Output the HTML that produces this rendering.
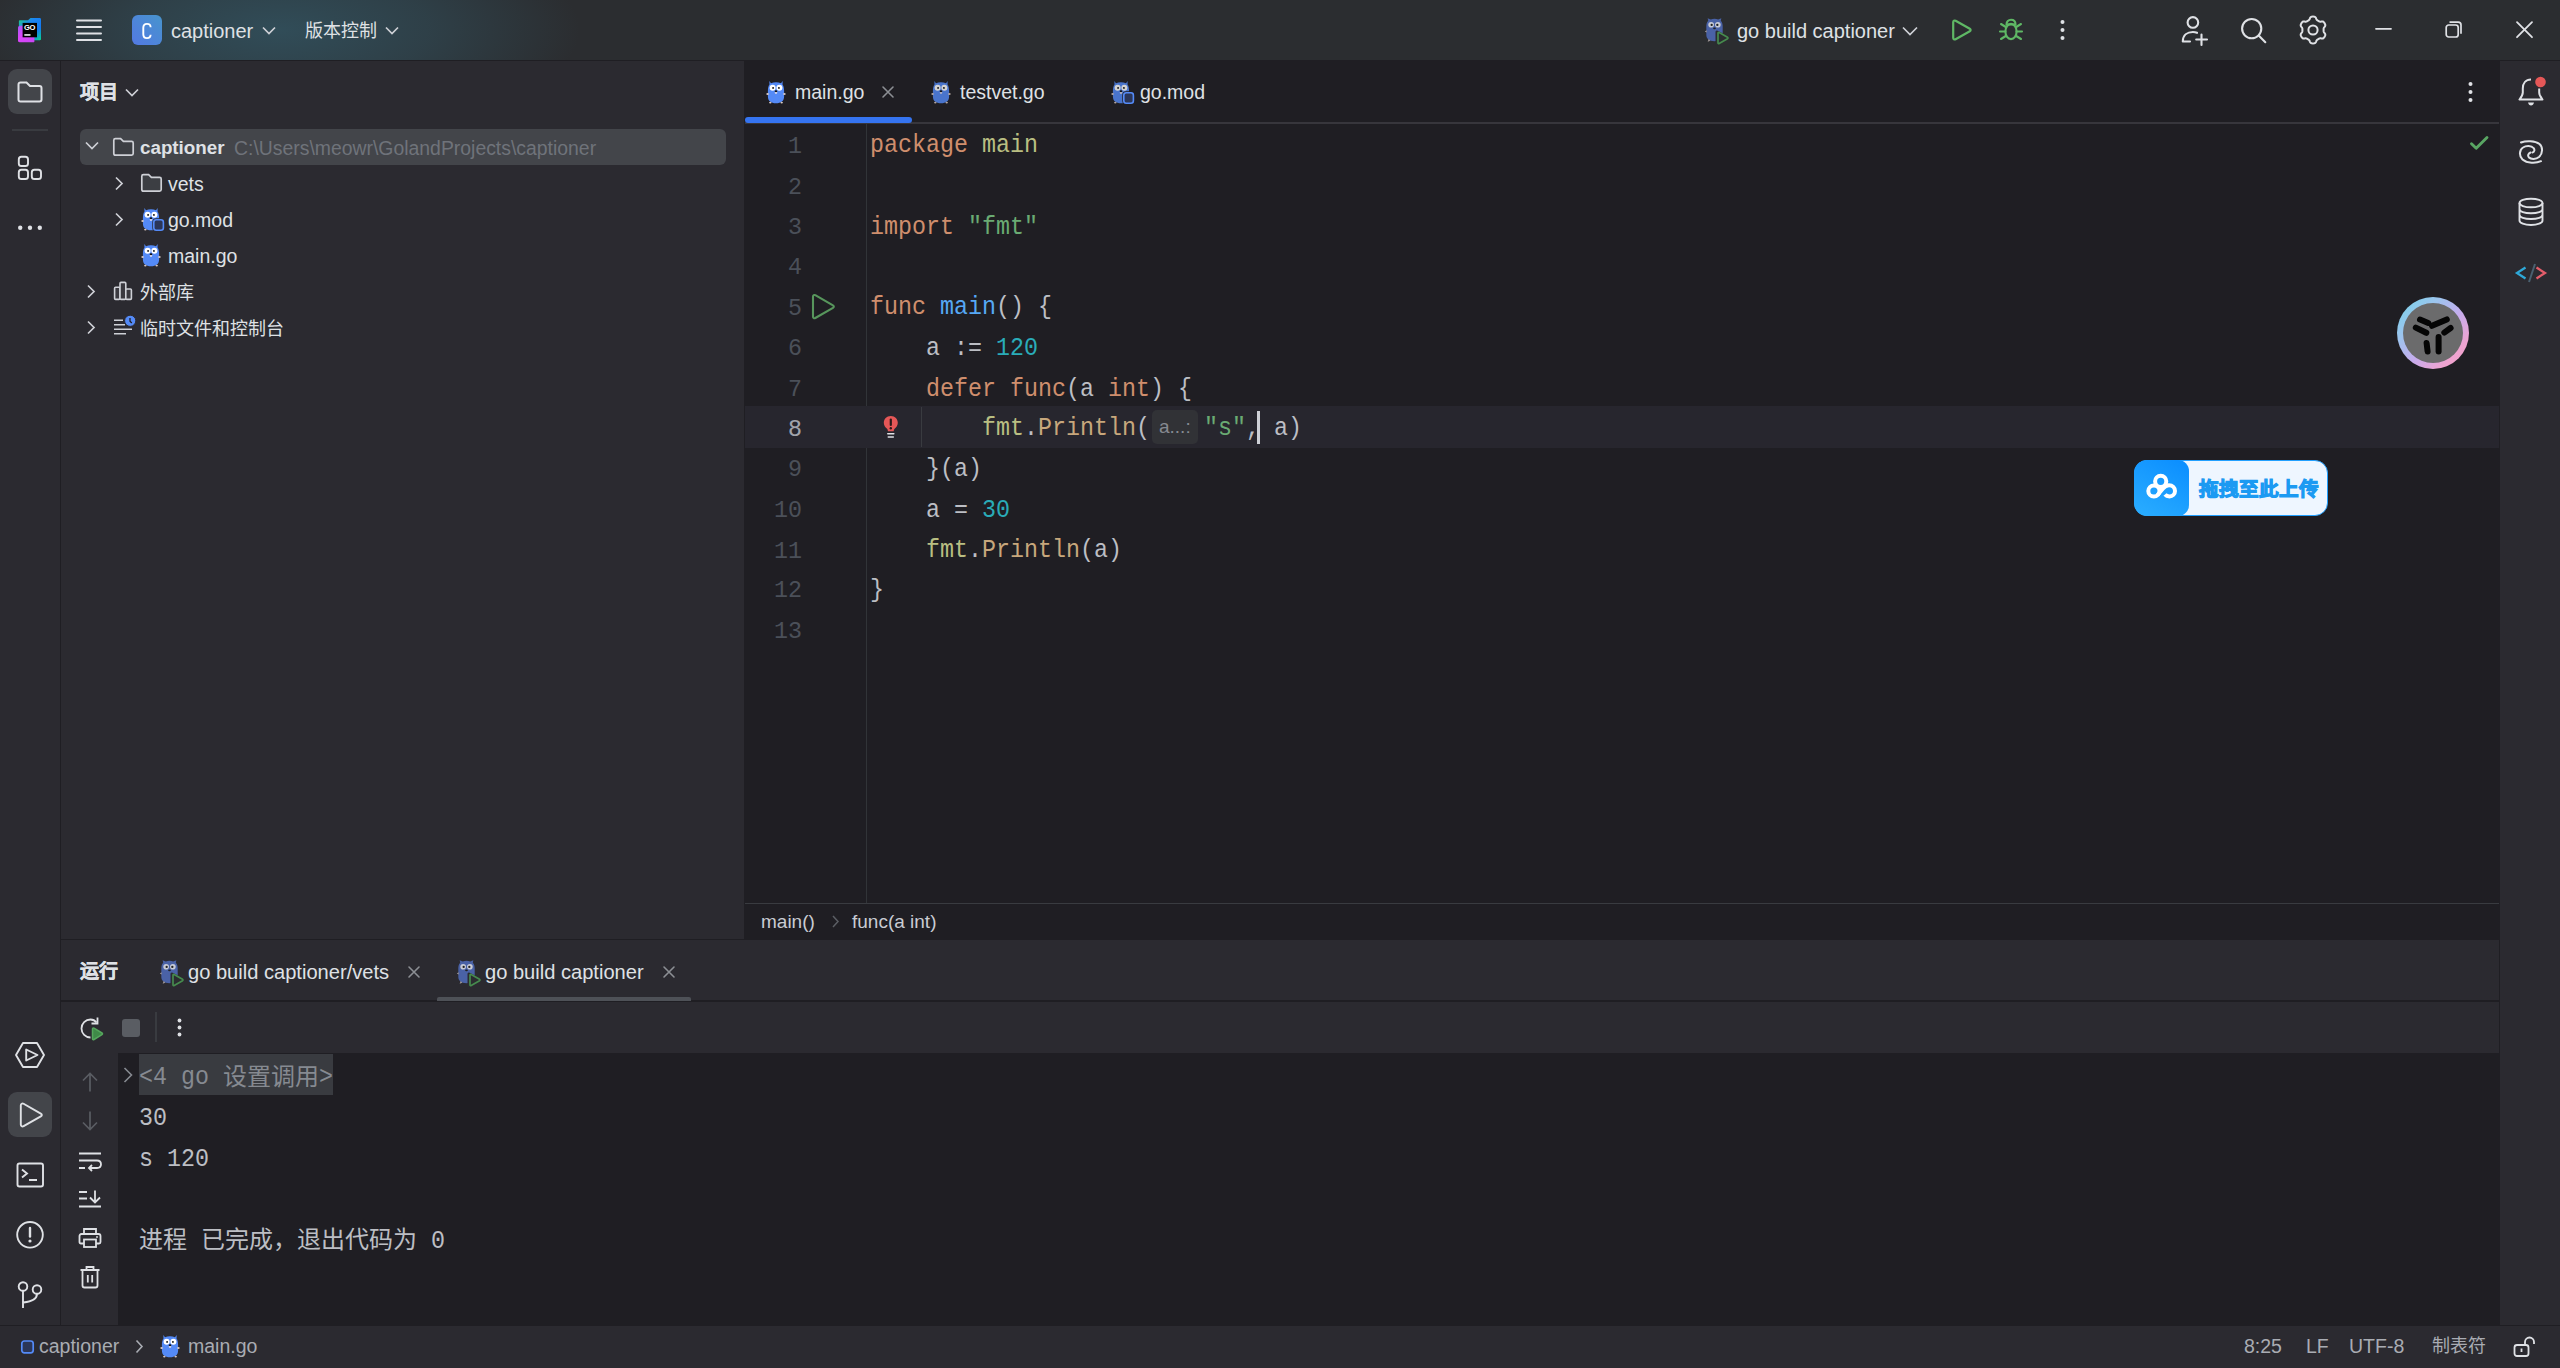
<!DOCTYPE html>
<html lang="zh-CN"><head><meta charset="utf-8">
<style>
*{margin:0;padding:0;box-sizing:border-box}
html,body{width:2560px;height:1368px;overflow:hidden;background:#2B2A30;font-family:"Liberation Sans",sans-serif;color:#DFE1E5}
.a{position:absolute}
.t{position:absolute;white-space:pre;font-size:19.5px;line-height:24px}
.m{font-family:"Liberation Mono",monospace;font-size:23.33px;white-space:pre;position:absolute;line-height:36.77px;transform:scaleY(1.1);transform-origin:0 0}
.c{font-family:"Liberation Mono",monospace;font-size:23.33px;white-space:pre;position:absolute;line-height:37.18px;transform:scaleY(1.1);transform-origin:0 0}
.n{font-family:"Liberation Mono",monospace;font-size:23.33px;white-space:pre;position:absolute;line-height:38.66px;transform:scaleY(1.045);transform-origin:0 0}
.k{position:absolute;white-space:pre;font-size:24px;line-height:30px}
svg{position:absolute;overflow:visible}
</style></head><body>
<svg width="0" height="0" style="position:absolute"><defs>
<symbol id="gopher" viewBox="0 0 20 24">
  <path d="M5 3.2 L3.3 1 L3.5 4.6 C2.3 6.1 1.9 8.6 1.9 11.5 V16.5 C1.9 21 5 23.3 10 23.3 C15 23.3 18.1 21 18.1 16.5 V11.5 C18.1 8.6 17.7 6.1 16.5 4.6 L16.7 1 L15 3.2 C13.6 2.5 11.9 2.2 10 2.2 C8.1 2.2 6.4 2.5 5 3.2 Z" fill="#548AF7"/>
  <ellipse cx="1.6" cy="14" rx="1.3" ry="1" fill="#D8C7C0"/><ellipse cx="18.4" cy="14" rx="1.3" ry="1" fill="#D8C7C0"/>
  <ellipse cx="4.3" cy="22.6" rx="1.2" ry="0.9" fill="#D8C7C0"/><ellipse cx="15.7" cy="22.6" rx="1.2" ry="0.9" fill="#D8C7C0"/>
  <circle cx="6.6" cy="7.7" r="3" fill="#fff"/><circle cx="13.4" cy="7.7" r="3" fill="#fff"/>
  <circle cx="7.1" cy="7.9" r="0.95" fill="#111"/><circle cx="12.9" cy="7.9" r="0.95" fill="#111"/>
  <ellipse cx="10" cy="11.2" rx="1.3" ry="0.9" fill="#111"/>
  <path d="M8.7 12.3 H11.3 C11.3 13.4 10.7 13.8 10 13.8 C9.3 13.8 8.7 13.4 8.7 12.3 Z" fill="#F2E6E6"/>
</symbol>
<symbol id="gopherd" viewBox="0 0 28 30">
  <g transform="translate(1,1) scale(1.05)"><path d="M4 3.5 L3.5 1.2 L6.5 2.3 C8.5 1.6 11.5 1.6 13.5 2.3 L16.5 1.2 L16 3.5 C17.5 5 17.8 7 17.8 9 L17.8 17 C17.8 21 15 23 10 23 C5 23 2.2 21 2.2 17 L2.2 9 C2.2 7 2.5 5 4 3.5 Z" fill="#4A62A6"/>
  <circle cx="6.8" cy="7.4" r="2.7" fill="#c8cbd6"/><circle cx="13.2" cy="7.4" r="2.7" fill="#c8cbd6"/>
  <circle cx="7.3" cy="7.5" r="1.1" fill="#222"/><circle cx="12.7" cy="7.5" r="1.1" fill="#222"/>
  <ellipse cx="10" cy="10.8" rx="1.3" ry="0.9" fill="#222"/>
  <path d="M2.5 12.5 L0.8 13.8 L2.6 14.8 Z M4.5 21 L3.5 23.5 L6 22.5 Z" fill="#a49b9b"/></g>
  <path d="M14 16 L14 28 L25.5 22 Z" fill="#2B2D30" stroke="#2B2D30" stroke-width="3" stroke-linejoin="round"/>
  <path d="M15 17.2 C15 16.5 15.6 16.2 16.2 16.5 L24.5 21.2 C25.1 21.6 25.1 22.4 24.5 22.8 L16.2 27.5 C15.6 27.8 15 27.5 15 26.8 Z" fill="none" stroke="#468A4E" stroke-width="1.7"/>
</symbol>
<symbol id="folder" viewBox="0 0 23 20"><path d="M1.8 3.2 C1.8 2.2 2.4 1.6 3.4 1.6 H8.6 L11.4 4.4 H19.6 C20.6 4.4 21.2 5 21.2 6 V16.6 C21.2 17.6 20.6 18.2 19.6 18.2 H3.4 C2.4 18.2 1.8 17.6 1.8 16.6 Z" fill="#3C3E43" stroke="#CED0D6" stroke-width="1.7"/></symbol>
</defs></svg>
<!-- title bar -->
<div class="a" id="title" style="left:0;top:0;width:2560px;height:60px;background:#2B2D30;overflow:hidden">
  <div class="a" style="left:-20px;top:-80px;width:600px;height:220px;background:radial-gradient(closest-side,rgba(50,82,95,0.85),rgba(50,82,95,0.5) 50%,rgba(43,45,48,0) 100%)"></div>
</div>
<div class="a" style="left:0;top:60px;width:2560px;height:1px;background:#1F1E23"></div>


<!-- TITLE CONTENT -->
<svg style="left:17px;top:17px" width="26" height="26" viewBox="0 0 26 26">
  <defs><linearGradient id="glb" x1="0" y1="0" x2="1" y2="1"><stop offset="0" stop-color="#21D07F"/><stop offset="0.35" stop-color="#1A86F2"/><stop offset="0.7" stop-color="#1479F0"/><stop offset="1" stop-color="#07D98A"/></linearGradient>
  <linearGradient id="glp" x1="0" y1="0" x2="1" y2="1"><stop offset="0" stop-color="#A05CF5"/><stop offset="0.4" stop-color="#DA45F8"/><stop offset="1" stop-color="#C946F5"/></linearGradient></defs>
  <path d="M3 3.2 H11 L13.5 1 H22.5 C23.5 1 24 1.5 24 2.5 V22 C24 22.8 23.5 23.2 22.8 23.2 H8 V9 H1.9 V4.5 C1.9 3.7 2.3 3.2 3 3.2 Z" fill="url(#glb)"/>
  <path d="M3.2 8.8 H12 V25.2 H2.6 C1.6 25.2 1 24.6 1 23.6 V11 C1 9.6 1.8 8.8 3.2 8.8 Z M12 18 H17.4 V24.2 C17.4 24.8 17 25.2 16.4 25.2 H12 Z" fill="url(#glp)"/>
  <rect x="5.6" y="5.9" width="14.4" height="14.4" fill="#000"/>
  <text x="12.6" y="13.3" font-family="Liberation Sans" font-weight="bold" font-size="7.6" fill="#fff" text-anchor="middle" letter-spacing="-0.3">GO</text>
  <rect x="7.3" y="17.2" width="6.2" height="1.5" fill="#fff"/>
</svg>
<svg style="left:76px;top:19px" width="26" height="23" viewBox="0 0 26 23"><g stroke="#DFE1E5" stroke-width="2" stroke-linecap="round"><path d="M1 1.5H25M1 8H25M1 14.5H25M1 21H25"/></g></svg>
<div class="a" style="left:132px;top:15px;width:30px;height:30px;border-radius:6px;background:linear-gradient(225deg,#4794CD,#5379E3)"></div>
<svg style="left:132px;top:15px" width="30" height="30" viewBox="0 0 30 30"><path d="M18.6 12.2 C18.6 10 17.3 8.9 15 8.9 C12.6 8.9 11.3 10.2 11.3 12.8 V19.2 C11.3 21.8 12.6 23.1 15 23.1 C17.3 23.1 18.6 22 18.6 19.8" fill="none" stroke="#fff" stroke-width="1.9"/></svg>
<div class="t" style="left:171px;top:18.5px;font-size:20px">captioner</div>
<svg style="left:262px;top:26px" width="14" height="10" viewBox="0 0 14 10"><path d="M1 1.5L7 7.5L13 1.5" fill="none" stroke="#CED0D6" stroke-width="1.7"/></svg>
<div class="t" style="left:305px;top:19px;font-size:18px">版本控制</div>
<svg style="left:385px;top:26px" width="14" height="10" viewBox="0 0 14 10"><path d="M1 1.5L7 7.5L13 1.5" fill="none" stroke="#CED0D6" stroke-width="1.7"/></svg>

<svg style="left:1703px;top:16px" width="28" height="30" viewBox="0 0 28 30"><use href="#gopherd"/></svg>
<div class="t" style="left:1737px;top:18.5px;font-size:20px">go build captioner</div>
<svg style="left:1902px;top:26px" width="16" height="10" viewBox="0 0 16 10"><path d="M1 1.5L8 8.5L15 1.5" fill="none" stroke="#CED0D6" stroke-width="1.7"/></svg>
<svg style="left:1951px;top:19px" width="21" height="22" viewBox="0 0 21 22"><path d="M2.2 3.2 C2.2 1.8 3.4 1.1 4.6 1.8 L18.8 9.8 C19.9 10.4 19.9 11.6 18.8 12.2 L4.6 20.2 C3.4 20.9 2.2 20.2 2.2 18.8 Z" fill="none" stroke="#5FB865" stroke-width="2.2"/></svg>
<svg style="left:1998px;top:18px" width="26" height="23" viewBox="0 0 26 23"><g fill="none" stroke="#5FB865" stroke-width="2.1" stroke-linecap="round"><path d="M8.5 6.5 C8.5 3.5 10.5 1.8 13 1.8 C15.5 1.8 17.5 3.5 17.5 6.5 Z"/><ellipse cx="13" cy="13.5" rx="5.6" ry="7.6"/><path d="M2 13.5H7.5M18.5 13.5H24M3 6L7.8 9M23 6L18.2 9M3 21L7.8 18M23 21L18.2 18"/></g></svg>
<svg style="left:2058px;top:18px" width="9" height="24" viewBox="0 0 9 24"><g fill="#DFE1E5"><circle cx="4.5" cy="4" r="2"/><circle cx="4.5" cy="12" r="2"/><circle cx="4.5" cy="20" r="2"/></g></svg>
<svg style="left:2180px;top:15px" width="30" height="30" viewBox="0 0 30 30"><g fill="none" stroke="#DFE1E5" stroke-width="2.1" stroke-linecap="round"><circle cx="12.9" cy="7.4" r="5.3"/><path d="M2.8 26.5 C2.8 20 7.5 17 12.9 17 C14.5 17 15.8 17.3 17 17.8 M2.8 26.5 H10"/><path d="M21.5 19.5V30M16.2 24.5H27"/></g></svg>
<svg style="left:2238px;top:14px" width="30" height="30" viewBox="0 0 30 30"><g fill="none" stroke="#DFE1E5" stroke-width="2.1" stroke-linecap="round"><circle cx="13.7" cy="14.6" r="9.6"/><path d="M20.7 21.6L27.3 28.2"/></g></svg>
<svg style="left:2298px;top:15px" width="30" height="30" viewBox="0 0 30 30"><g fill="none" stroke="#DFE1E5" stroke-width="2" stroke-linejoin="round"><path d="M25.60 15.00 L25.60 14.54 L25.60 14.07 L25.62 13.60 L25.73 13.11 L26.04 12.55 L26.59 11.89 L27.10 11.18 L27.32 10.52 L27.28 9.91 L27.11 9.35 L26.88 8.82 L26.60 8.30 L26.30 7.80 L25.95 7.33 L25.54 6.91 L25.04 6.58 L24.36 6.43 L23.49 6.51 L22.64 6.66 L22.00 6.65 L21.52 6.50 L21.10 6.29 L20.70 6.05 L20.30 5.82 L19.90 5.59 L19.49 5.36 L19.10 5.11 L18.73 4.76 L18.40 4.21 L18.11 3.41 L17.75 2.61 L17.28 2.09 L16.73 1.82 L16.16 1.69 L15.58 1.62 L15.00 1.60 L14.42 1.62 L13.84 1.69 L13.27 1.82 L12.72 2.09 L12.25 2.61 L11.89 3.41 L11.60 4.21 L11.27 4.76 L10.90 5.11 L10.51 5.36 L10.10 5.59 L9.70 5.82 L9.30 6.05 L8.90 6.29 L8.48 6.50 L8.00 6.65 L7.36 6.66 L6.51 6.51 L5.64 6.43 L4.96 6.58 L4.46 6.91 L4.05 7.33 L3.70 7.80 L3.40 8.30 L3.12 8.82 L2.89 9.35 L2.72 9.91 L2.68 10.52 L2.90 11.18 L3.41 11.89 L3.96 12.55 L4.27 13.11 L4.38 13.60 L4.40 14.07 L4.40 14.54 L4.40 15.00 L4.40 15.46 L4.40 15.93 L4.38 16.40 L4.27 16.89 L3.96 17.45 L3.41 18.11 L2.90 18.82 L2.68 19.48 L2.72 20.09 L2.89 20.65 L3.12 21.18 L3.40 21.70 L3.70 22.20 L4.05 22.67 L4.46 23.09 L4.96 23.42 L5.64 23.57 L6.51 23.49 L7.36 23.34 L8.00 23.35 L8.48 23.50 L8.90 23.71 L9.30 23.95 L9.70 24.18 L10.10 24.41 L10.51 24.64 L10.90 24.89 L11.27 25.24 L11.60 25.79 L11.89 26.59 L12.25 27.39 L12.72 27.91 L13.27 28.18 L13.84 28.31 L14.42 28.38 L15.00 28.40 L15.58 28.38 L16.16 28.31 L16.73 28.18 L17.28 27.91 L17.75 27.39 L18.11 26.59 L18.40 25.79 L18.73 25.24 L19.10 24.89 L19.49 24.64 L19.90 24.41 L20.30 24.18 L20.70 23.95 L21.10 23.71 L21.52 23.50 L22.00 23.35 L22.64 23.34 L23.49 23.49 L24.36 23.57 L25.04 23.42 L25.54 23.09 L25.95 22.67 L26.30 22.20 L26.60 21.70 L26.88 21.18 L27.11 20.65 L27.28 20.09 L27.32 19.48 L27.10 18.82 L26.59 18.11 L26.04 17.45 L25.73 16.89 L25.62 16.40 L25.60 15.93 L25.60 15.46 Z"/><circle cx="15" cy="15" r="4.6"/></g></svg>
<svg style="left:2375px;top:27px" width="17" height="4" viewBox="0 0 17 4"><path d="M1 1.8H16" stroke="#DFE1E5" stroke-width="1.8" stroke-linecap="round"/></svg>
<svg style="left:2444px;top:20px" width="20" height="20" viewBox="0 0 20 20"><g fill="none" stroke="#DFE1E5" stroke-width="1.7"><rect x="2.2" y="5" width="12" height="12" rx="2.5"/><path d="M5.5 2.2H14.2C16 2.2 17 3.2 17 5V13.8"/></g></svg>
<svg style="left:2515px;top:20px" width="19" height="19" viewBox="0 0 19 19"><path d="M2 2.2L17 17.2M17 2.2L2 17.2" stroke="#DFE1E5" stroke-width="1.8" stroke-linecap="round"/></svg>

<!-- left strip -->
<div class="a" style="left:0;top:61px;width:60px;height:1264px;background:#2B2A30"></div>
<div class="a" style="left:60px;top:61px;width:1px;height:1264px;background:#1F1E23"></div>

<!-- project panel -->
<div class="a" style="left:61px;top:61px;width:683px;height:878px;background:#2B2A30"></div>
<div class="a" style="left:744px;top:61px;width:1px;height:878px;background:#1F1E23"></div>

<!-- editor -->
<div class="a" style="left:745px;top:61px;width:1755px;height:878px;background:#1F1E23"></div>
<div class="a" style="left:745px;top:122px;width:1755px;height:2px;background:#37363C"></div>
<div class="a" style="left:745px;top:903px;width:1755px;height:1px;background:#393B40"></div>
<div class="a" style="left:866px;top:124px;width:1px;height:779px;background:#313438"></div>
<div class="a" style="left:745px;top:406px;width:1755px;height:41.5px;background:#27262E"></div>

<!-- right strip -->
<div class="a" style="left:2499px;top:61px;width:1px;height:1264px;background:#1F1E23"></div>
<div class="a" style="left:2500px;top:61px;width:60px;height:1264px;background:#2B2A30"></div>

<!-- bottom panel -->
<div class="a" style="left:61px;top:939px;width:2438px;height:1px;background:#1F1E23"></div>
<div class="a" style="left:61px;top:940px;width:2438px;height:61px;background:#2B2A30"></div>
<div class="a" style="left:61px;top:1000px;width:2438px;height:2px;background:#1F1E23"></div>
<div class="a" style="left:61px;top:1002px;width:2438px;height:51px;background:#2B2A30"></div>
<div class="a" style="left:61px;top:1053px;width:57px;height:272px;background:#2B2A30"></div>
<div class="a" style="left:118px;top:1053px;width:2381px;height:272px;background:#1F1E23"></div>

<!-- status bar -->
<div class="a" style="left:0;top:1325px;width:2560px;height:1px;background:#1F1E23"></div>
<div class="a" style="left:0;top:1326px;width:2560px;height:42px;background:#2B2A30"></div>


<!-- LEFT STRIP CONTENT -->
<div class="a" style="left:8px;top:69px;width:44px;height:45px;border-radius:9px;background:#43454A"></div>
<svg style="left:16px;top:80px" width="28" height="24" viewBox="0 0 28 24"><path d="M2.5 4.5 C2.5 3.2 3.3 2.5 4.5 2.5 H10.5 L14 6 H23.5 C24.8 6 25.5 6.8 25.5 8 V19.5 C25.5 20.8 24.8 21.5 23.5 21.5 H4.5 C3.2 21.5 2.5 20.8 2.5 19.5 Z" fill="none" stroke="#DFE1E5" stroke-width="2"/></svg>
<div class="a" style="left:12px;top:129px;width:36px;height:2px;background:#393B40"></div>
<svg style="left:16px;top:154px" width="28" height="28" viewBox="0 0 28 28"><g fill="none" stroke="#DFE1E5" stroke-width="1.9"><rect x="2.8" y="2.8" width="9.2" height="9.2" rx="2.6"/><rect x="2.8" y="15.8" width="9.2" height="9.2" rx="2.6"/><rect x="15.8" y="15.8" width="9.2" height="9.2" rx="2.6"/></g></svg>
<svg style="left:16px;top:222px" width="28" height="12" viewBox="0 0 28 12"><g fill="#DFE1E5"><circle cx="4.2" cy="5.8" r="2.2"/><circle cx="14" cy="5.8" r="2.2"/><circle cx="23.8" cy="5.8" r="2.2"/></g></svg>

<svg style="left:14px;top:1040px" width="32" height="30" viewBox="0 0 32 30"><g fill="none" stroke="#DFE1E5" stroke-width="1.9" stroke-linejoin="round"><path d="M9 3 H23 L30 15 L23 27 H9 L2 15 Z"/><path d="M12.2 9.5 V20.5 L23.5 15 Z"/></g></svg>
<div class="a" style="left:8px;top:1092px;width:44px;height:45px;border-radius:9px;background:#43454A"></div>
<svg style="left:17px;top:1101px" width="28" height="28" viewBox="0 0 28 28"><path d="M3.8 4.5 C3.8 2.8 5.2 2 6.6 2.8 L23.8 12.6 C25.2 13.4 25.2 14.6 23.8 15.4 L6.6 25.2 C5.2 26 3.8 25.2 3.8 23.5 Z" fill="none" stroke="#DFE1E5" stroke-width="1.9" stroke-linejoin="round"/></svg>
<svg style="left:15px;top:1161px" width="30" height="28" viewBox="0 0 30 28"><g fill="none" stroke="#DFE1E5" stroke-width="1.9"><rect x="2.5" y="2.5" width="25.5" height="23" rx="2"/><path d="M7 8.5 L12 12.5 L7 16.5 M14 19 H22"/></g></svg>
<svg style="left:15px;top:1220px" width="30" height="30" viewBox="0 0 30 30"><g fill="none" stroke="#DFE1E5" stroke-width="1.9"><circle cx="15" cy="14.8" r="12.8"/></g><path d="M15 8 V16.5" stroke="#DFE1E5" stroke-width="2.4" stroke-linecap="round"/><circle cx="15" cy="21" r="1.6" fill="#DFE1E5"/></svg>
<svg style="left:15px;top:1280px" width="30" height="30" viewBox="0 0 30 30"><g fill="none" stroke="#DFE1E5" stroke-width="1.9"><circle cx="8" cy="6.5" r="4.3"/><circle cx="22" cy="9.5" r="4.3"/><path d="M8 10.8 V28 M22 13.8 C22 18.5 18 21.5 8.5 22.5"/></g></svg>

<!-- PROJECT PANEL CONTENT -->
<div class="t" style="left:80px;top:81px;font-weight:bold;font-size:19px;-webkit-text-stroke:0.35px #DFE1E5">项目</div>
<svg style="left:125px;top:88px" width="14" height="10" viewBox="0 0 14 10"><path d="M1 1.5L7 7.5L13 1.5" fill="none" stroke="#CED0D6" stroke-width="1.7"/></svg>
<div class="a" style="left:80px;top:129px;width:646px;height:36px;border-radius:6px;background:#43454A"></div>
<svg style="left:85px;top:141px" width="14" height="10" viewBox="0 0 14 10"><path d="M1 1.5L7 7.5L13 1.5" fill="none" stroke="#CED0D6" stroke-width="1.7"/></svg>
<svg style="left:112px;top:137px" width="23" height="20" viewBox="0 0 23 20"><use href="#folder"/></svg>
<div class="t" style="left:140px;top:136px;font-weight:bold;font-size:18.8px">captioner</div>
<div class="t" style="left:234px;top:135.7px;color:#6F737A;font-size:19.4px">C:\Users\meowr\GolandProjects\captioner</div>

<svg style="left:114px;top:176px" width="10" height="15" viewBox="0 0 10 15"><path d="M2 1.5L8 7.5L2 13.5" fill="none" stroke="#CED0D6" stroke-width="1.7"/></svg>
<svg style="left:140px;top:173px" width="23" height="20" viewBox="0 0 23 20"><use href="#folder"/></svg>
<div class="t" style="left:168px;top:172px">vets</div>

<svg style="left:114px;top:212px" width="10" height="15" viewBox="0 0 10 15"><path d="M2 1.5L8 7.5L2 13.5" fill="none" stroke="#CED0D6" stroke-width="1.7"/></svg>
<svg style="left:141px;top:207px" width="20" height="24" viewBox="0 0 20 24"><use href="#gopher"/></svg>
<svg style="left:152px;top:218px" width="13" height="14" viewBox="0 0 13 14"><rect x="1.8" y="1.8" width="9.6" height="10.4" rx="2.4" fill="#2B3658" stroke="#2B2A30" stroke-width="3"/><rect x="1.8" y="1.8" width="9.6" height="10.4" rx="2.4" fill="#2B3658" stroke="#548AF7" stroke-width="1.6"/></svg>
<div class="t" style="left:168px;top:207.5px">go.mod</div>

<svg style="left:141px;top:243px" width="20" height="24" viewBox="0 0 20 24"><use href="#gopher"/></svg>
<div class="t" style="left:168px;top:243.7px">main.go</div>

<svg style="left:86px;top:284px" width="10" height="15" viewBox="0 0 10 15"><path d="M2 1.5L8 7.5L2 13.5" fill="none" stroke="#CED0D6" stroke-width="1.7"/></svg>
<svg style="left:112px;top:280px" width="24" height="22" viewBox="0 0 24 22"><g fill="#3A393F" stroke="#CED0D6" stroke-width="1.6" stroke-linejoin="round"><rect x="2.6" y="7.2" width="5.4" height="12.2" rx="1"/><rect x="8" y="2.4" width="5.8" height="17" rx="1"/><rect x="13.8" y="9" width="5.6" height="10.4" rx="1"/></g></svg>
<div class="t" style="left:140px;top:281px;font-size:18px">外部库</div>

<svg style="left:86px;top:320px" width="10" height="15" viewBox="0 0 10 15"><path d="M2 1.5L8 7.5L2 13.5" fill="none" stroke="#CED0D6" stroke-width="1.7"/></svg>
<svg style="left:112px;top:312px" width="26" height="26" viewBox="0 0 26 26"><g stroke="#CED0D6" stroke-width="1.6"><path d="M2 8.3H11M2 12.8H13M2 17.3H20M2 21.8H14"/></g><circle cx="18.2" cy="8.8" r="5.6" fill="#548AF7" stroke="#2B2A30" stroke-width="1"/><path d="M18 6V9.2L19.8 11" stroke="#1F1E23" stroke-width="1.3" fill="none"/></svg>
<div class="t" style="left:140px;top:317px;font-size:18px">临时文件和控制台</div>


<!-- EDITOR CONTENT -->
<svg style="left:766px;top:80px" width="20" height="24" viewBox="0 0 20 24"><use href="#gopher"/></svg>
<div class="t" style="left:795px;top:80px">main.go</div>
<svg style="left:881px;top:85px" width="14" height="14" viewBox="0 0 14 14"><path d="M2 2L12 12M12 2L2 12" stroke="#8C8F94" stroke-width="1.6" stroke-linecap="round"/></svg>
<div class="a" style="left:745px;top:117px;width:167px;height:6px;border-radius:3px;background:#3574F0"></div>
<svg style="left:931px;top:80px;opacity:0.8" width="20" height="24" viewBox="0 0 20 24"><use href="#gopher"/></svg>
<div class="t" style="left:960px;top:80px">testvet.go</div>
<svg style="left:1111px;top:80px;opacity:0.8" width="20" height="24" viewBox="0 0 20 24"><use href="#gopher"/></svg>
<svg style="left:1122px;top:91px" width="13" height="14" viewBox="0 0 13 14"><rect x="1.8" y="1.8" width="9.6" height="10.4" rx="2.4" fill="#2B3658" stroke="#1F1E23" stroke-width="3"/><rect x="1.8" y="1.8" width="9.6" height="10.4" rx="2.4" fill="#2B3658" stroke="#548AF7" stroke-width="1.6"/></svg>
<div class="t" style="left:1140px;top:80px">go.mod</div>
<svg style="left:2466px;top:80px" width="9" height="24" viewBox="0 0 9 24"><g fill="#DFE1E5"><circle cx="4.5" cy="4" r="2"/><circle cx="4.5" cy="12" r="2"/><circle cx="4.5" cy="20" r="2"/></g></svg>

<div class="n" style="left:745px;top:127.3px;width:57px;text-align:right;color:#4B5059">1
2
3
4
5
6
7
8
9
10
11
12
13</div>
<div class="n" style="left:745px;top:410.1px;width:57px;text-align:right;color:#A1A3AB">8</div>
<div class="a" style="left:921px;top:407px;width:1px;height:40px;background:#393B40"></div>
<div class="a" style="left:1152px;top:410px;width:46px;height:34px;border-radius:5px;background:#313236"></div>
<div class="t" style="left:1159px;top:415px;font-size:19px;color:#868A91">a...:</div>
<div class="m" style="left:870px;top:126px;color:#BCBEC4"><span style="color:#CF8E6D">package</span> <span style="color:#B9BE82">main</span>

<span style="color:#CF8E6D">import</span> <span style="color:#6AAB73">"fmt"</span>

<span style="color:#CF8E6D">func</span> <span style="color:#56A8F5">main</span>() {
    a := <span style="color:#2AACB8">120</span>
    <span style="color:#CF8E6D">defer</span> <span style="color:#CF8E6D">func</span>(a <span style="color:#CF8E6D">int</span>) {
        <span style="color:#B9BE82">fmt</span>.<span style="color:#C7A77C">Println</span>(<span style="display:inline-block;width:54px"></span><span style="color:#6AAB73">"s"</span>, a)
    }(a)
    a = <span style="color:#2AACB8">30</span>
    <span style="color:#B9BE82">fmt</span>.<span style="color:#C7A77C">Println</span>(a)
}
</div>
<div class="a" style="left:1257px;top:411px;width:3px;height:33px;background:#CED0D6"></div>
<svg style="left:808px;top:293px" width="28" height="28" viewBox="0 0 28 28"><path d="M5 3.5 C5 2.2 6.2 1.6 7.3 2.2 L25 12.4 C26.1 13 26.1 14.2 25 14.8 L7.3 25 C6.2 25.6 5 25 5 23.7 Z" fill="none" stroke="#57965C" stroke-width="2.1" stroke-linejoin="round"/></svg>
<svg style="left:881px;top:414px" width="20" height="26" viewBox="0 0 20 26"><path d="M9.8 2 C5.5 2 2.8 5 2.8 8.8 C2.8 11.5 4.3 13.2 5.8 14.6 C6.6 15.4 6.9 16.2 6.9 17.2 H12.7 C12.7 16.2 13 15.4 13.8 14.6 C15.3 13.2 16.8 11.5 16.8 8.8 C16.8 5 14.1 2 9.8 2 Z" fill="#E55757"/><path d="M9.8 5.5V11" stroke="#2a1a1a" stroke-width="2.2" stroke-linecap="round"/><circle cx="9.8" cy="14.2" r="1.2" fill="#2a1a1a"/><path d="M6.8 19.8H12.8M7.3 23H12.3" stroke="#DFE1E5" stroke-width="1.6" stroke-linecap="round"/></svg>
<svg style="left:2468px;top:134px" width="22" height="18" viewBox="0 0 22 18"><path d="M3.5 9.8L8.2 14.3L19 3.5" fill="none" stroke="#59A663" stroke-width="2.9" stroke-linecap="round" stroke-linejoin="round"/></svg>

<div class="t" style="left:761px;top:910px;font-size:19px;color:#C9CCD3">main()</div>
<svg style="left:830px;top:914px" width="10" height="15" viewBox="0 0 10 15"><path d="M3 2L8 7.5L3 13" fill="none" stroke="#5B5E64" stroke-width="1.5"/></svg>
<div class="t" style="left:852px;top:910px;font-size:19px;color:#C9CCD3">func(a int)</div>


<!-- RIGHT STRIP -->
<svg style="left:2514px;top:74px" width="34" height="34" viewBox="0 0 34 34"><g fill="none" stroke="#DFE1E5" stroke-width="2" stroke-linejoin="round"><path d="M17 5.5 C11.5 5.5 8.8 9.5 8.8 14.5 V18.5 C8.8 21 7.5 23 5.5 25.5 H28.5 C26.5 23 25.2 21 25.2 18.5 V14.5"/></g><path d="M14 28.5 H20 C19.5 30.5 18.5 31.5 17 31.5 C15.5 31.5 14.5 30.5 14 28.5 Z" fill="#DFE1E5"/><circle cx="26.5" cy="8" r="5.3" fill="#E55757"/></svg>
<svg style="left:2517px;top:138px" width="28" height="28" viewBox="0 0 28 28"><g fill="none" stroke="#DFE1E5" stroke-width="2" stroke-linecap="round"><path d="M4 4.5 C9 2.5 18 2.5 22.5 6 C26 9 26 15.5 22 19 C19 21.5 14 21.5 12 19.5 C10.5 18 11 15.5 13.5 14.5"/><path d="M24 23.2 C19 25.5 10 25.5 5.5 21.5 C2 18.5 2 12 6 9.5 C9 7.5 14.5 7.5 16.5 10 C18 11.5 17.5 14 15.5 14.5"/></g></svg>
<svg style="left:2517px;top:197px" width="28" height="30" viewBox="0 0 28 30"><g fill="none" stroke="#DFE1E5" stroke-width="1.9"><ellipse cx="14" cy="6" rx="11.5" ry="4.3"/><path d="M2.5 6 V23.5 C2.5 26 7.5 28 14 28 C20.5 28 25.5 26 25.5 23.5 V6 M2.5 12 C2.5 14.5 7.5 16.3 14 16.3 C20.5 16.3 25.5 14.5 25.5 12 M2.5 17.8 C2.5 20.3 7.5 22 14 22 C20.5 22 25.5 20.3 25.5 17.8"/></g></svg>
<svg style="left:2514px;top:262px" width="34" height="22" viewBox="0 0 34 22"><path d="M11.5 5.5 L3 11 L11.5 16.5" fill="none" stroke="#2EA8D8" stroke-width="2.3"/><path d="M21 2 L15 20" stroke="#4A6070" stroke-width="2"/><path d="M22.5 5.5 L31 11 L22.5 16.5" fill="none" stroke="#E35D6A" stroke-width="2.3"/></svg>

<!-- FLOATING -->
<div class="a" style="left:2397px;top:297px;width:72px;height:72px;border-radius:50%;background:linear-gradient(135deg,#72D6E8 0%,#9CC4EE 30%,#C6ADEE 55%,#EFA3D0 80%,#F2A0C6 100%)"></div>
<div class="a" style="left:2403px;top:303px;width:60px;height:60px;border-radius:50%;background:#6B6B6C"></div>
<svg style="left:2397px;top:297px" width="72" height="72" viewBox="2397 297 72 72"><g stroke="#050505" stroke-width="6" stroke-linecap="round" stroke-linejoin="round" fill="none"><path d="M2420 319.6 L2428.2 323"/><path d="M2432 325.8 L2446.8 319.4"/><path d="M2415.8 327.6 L2426.3 332.8"/><path d="M2444.3 332.6 L2450.6 328"/><path d="M2426.6 343 L2427.6 351.5"/><path d="M2438.6 337 L2438.6 351.5"/></g></svg>

<div class="a" style="left:2134px;top:460px;width:194px;height:56px;border-radius:13px;background:#EEF6FF;border:1.5px solid #22A0FF"></div>
<div class="a" style="left:2134px;top:460px;width:55px;height:56px;border-radius:13px 11px 11px 13px;background:linear-gradient(30deg,#2BAEFF,#0A8DFF)"></div>
<svg style="left:2144px;top:472px" width="36" height="30" viewBox="0 0 36 30"><g fill="none" stroke="#fff" stroke-width="4"><circle cx="16.7" cy="9.3" r="5.6"/><circle cx="9.9" cy="19" r="5.6"/><path d="M13.5 23 L19 16.5 C20.5 14.5 22.5 13.2 25 13.2 C28.5 13.2 31 15.8 31 19 C31 22.2 28.5 24.4 25.5 24.4 C23.3 24.4 21.8 23.5 21 22.5"/></g></svg>
<div class="t" style="left:2199px;top:476.5px;font-size:19.5px;font-weight:bold;color:#1C9AF2;-webkit-text-stroke:1.1px #1C9AF2">拖拽至此上传</div>

<!-- BOTTOM PANEL CONTENT -->
<div class="t" style="left:80px;top:960px;font-weight:bold;font-size:19px;-webkit-text-stroke:0.35px #DFE1E5">运行</div>
<svg style="left:158px;top:958px" width="28" height="30" viewBox="0 0 28 30"><use href="#gopherd"/></svg>
<div class="t" style="left:188px;top:960px;font-size:20.1px">go build captioner/vets</div>
<svg style="left:407px;top:965px" width="14" height="14" viewBox="0 0 14 14"><path d="M2 2L12 12M12 2L2 12" stroke="#8C8F94" stroke-width="1.6" stroke-linecap="round"/></svg>
<svg style="left:455px;top:958px" width="28" height="30" viewBox="0 0 28 30"><use href="#gopherd"/></svg>
<div class="t" style="left:485px;top:960px;font-size:20.1px">go build captioner</div>
<svg style="left:662px;top:965px" width="14" height="14" viewBox="0 0 14 14"><path d="M2 2L12 12M12 2L2 12" stroke="#8C8F94" stroke-width="1.6" stroke-linecap="round"/></svg>
<div class="a" style="left:437px;top:997px;width:254px;height:4px;border-radius:2px 2px 0 0;background:#4E5157"></div>

<svg style="left:79px;top:1016px" width="26" height="26" viewBox="0 0 26 26"><g fill="none" stroke="#DFE1E5" stroke-width="1.8"><path d="M17.5 6.5 C16 4.5 13.8 3.5 11.5 3.5 C6.5 3.5 2.5 7.5 2.5 12.5 C2.5 17.5 6.5 21.5 11.5 21.5"/><path d="M18.5 1.5 V7.5 H12.5"/></g><path d="M13.5 13 C13.5 12.2 14.3 11.8 15 12.2 L23 17 C23.7 17.4 23.7 18.3 23 18.7 L15 23.5 C14.3 23.9 13.5 23.5 13.5 22.7 Z" fill="#3F8A48" stroke="#55A65D" stroke-width="1.5"/></svg>
<div class="a" style="left:122px;top:1019px;width:18px;height:18px;border-radius:3px;background:#5A5D63"></div>
<div class="a" style="left:155px;top:1012px;width:2px;height:30px;background:#393B40"></div>
<svg style="left:175px;top:1015px" width="9" height="24" viewBox="0 0 9 24"><g fill="#DFE1E5"><circle cx="4.5" cy="5.5" r="1.9"/><circle cx="4.5" cy="12.5" r="1.9"/><circle cx="4.5" cy="19.5" r="1.9"/></g></svg>

<svg style="left:80px;top:1071px" width="20" height="22" viewBox="0 0 20 22"><path d="M10 20.5 V3 M3 9.5 L10 2.5 L17 9.5" fill="none" stroke="#5A5D63" stroke-width="1.7"/></svg>
<svg style="left:80px;top:1110px" width="20" height="22" viewBox="0 0 20 22"><path d="M10 1.5 V19 M3 12.5 L10 19.5 L17 12.5" fill="none" stroke="#5A5D63" stroke-width="1.7"/></svg>
<svg style="left:77px;top:1150px" width="26" height="22" viewBox="0 0 26 22"><g fill="none" stroke="#DFE1E5" stroke-width="1.8"><path d="M2 3.5 H24 M2 10.5 H20 C22.5 10.5 24 12.2 24 14.3 C24 16.5 22.5 18 20 18 H12 M2 18 H8"/><path d="M15 15 L12 18 L15 21"/></g></svg>
<svg style="left:77px;top:1189px" width="26" height="20" viewBox="0 0 26 20"><g fill="none" stroke="#DFE1E5" stroke-width="1.8"><path d="M2 3 H10 M2 9.5 H10 M2 17.5 H24 M18 1.5 V13.5 M13 8.5 L18 13.5 L23 8.5"/></g></svg>
<svg style="left:77px;top:1226px" width="26" height="24" viewBox="0 0 26 24"><g fill="none" stroke="#DFE1E5" stroke-width="1.8"><path d="M7 8 V3 H19 V8"/><path d="M7 17.5 H4 C3 17.5 2.5 17 2.5 16 V10 C2.5 8.8 3.2 8 4.5 8 H21.5 C22.8 8 23.5 8.8 23.5 10 V16 C23.5 17 23 17.5 22 17.5 H19"/><rect x="7" y="13.5" width="12" height="7.5"/></g><circle cx="20" cy="11" r="0.9" fill="#DFE1E5"/></svg>
<svg style="left:78px;top:1264px" width="24" height="26" viewBox="0 0 24 26"><g fill="none" stroke="#DFE1E5" stroke-width="1.8"><path d="M2.5 6 H21.5 M8.5 6 V3 H15.5 V6 M4.5 6 V21.5 C4.5 22.8 5.2 23.5 6.5 23.5 H17.5 C18.8 23.5 19.5 22.8 19.5 21.5 V6 M9.8 11 V18.5 M14.2 11 V18.5"/></g></svg>

<svg style="left:122px;top:1066px" width="12" height="18" viewBox="0 0 12 18"><path d="M2.5 2 L9.5 9 L2.5 16" fill="none" stroke="#868A91" stroke-width="1.6"/></svg>
<div class="a" style="left:139px;top:1054px;width:194px;height:41px;background:#393B40"></div>
<div class="c" style="left:139px;top:1058px;color:#868A91">&lt;4 go</div>
<div class="k" style="left:223px;top:1062px;color:#868A91">设置调用</div>
<div class="c" style="left:319px;top:1058px;color:#868A91">&gt;</div>
<div class="c" style="left:139px;top:1099px;color:#BCBEC4">30</div>
<div class="c" style="left:139px;top:1140px;color:#BCBEC4">s 120</div>
<div class="k" style="left:139px;top:1225px;color:#BCBEC4">进程</div>
<div class="k" style="left:201px;top:1225px;color:#BCBEC4">已完成，退出代码为</div>
<div class="c" style="left:431px;top:1221.8px;color:#BCBEC4">0</div>

<!-- STATUS BAR -->
<svg style="left:20px;top:1339px" width="15" height="16" viewBox="0 0 15 16"><rect x="1.8" y="2" width="11.4" height="11.8" rx="2.5" fill="#2B3658" stroke="#548AF7" stroke-width="1.7"/></svg>
<div class="t" style="left:39px;top:1334px;color:#A9ACB3">captioner</div>
<svg style="left:134px;top:1339px" width="10" height="15" viewBox="0 0 10 15"><path d="M2.5 1.5L8 7.5L2.5 13.5" fill="none" stroke="#A9ACB3" stroke-width="1.6"/></svg>
<svg style="left:160px;top:1334px" width="20" height="24" viewBox="0 0 20 24"><use href="#gopher"/></svg>
<div class="t" style="left:188px;top:1334px;color:#A9ACB3">main.go</div>
<div class="t" style="left:2244px;top:1334px;color:#A9ACB3">8:25</div>
<div class="t" style="left:2306px;top:1334px;color:#A9ACB3">LF</div>
<div class="t" style="left:2349px;top:1334px;color:#A9ACB3">UTF-8</div>
<div class="t" style="left:2432px;top:1334px;color:#A9ACB3;font-size:18px">制表符</div>
<svg style="left:2512px;top:1335px" width="24" height="24" viewBox="0 0 24 24"><g fill="none" stroke="#DFE1E5" stroke-width="1.8"><rect x="2.5" y="10" width="14" height="11" rx="2.5"/><path d="M13 10 V7 C13 4.5 15 2.5 17.5 2.5 C20 2.5 22 4.5 22 7 V9"/></g><path d="M9.5 13.5V17" stroke="#DFE1E5" stroke-width="1.8"/></svg>

</body></html>
